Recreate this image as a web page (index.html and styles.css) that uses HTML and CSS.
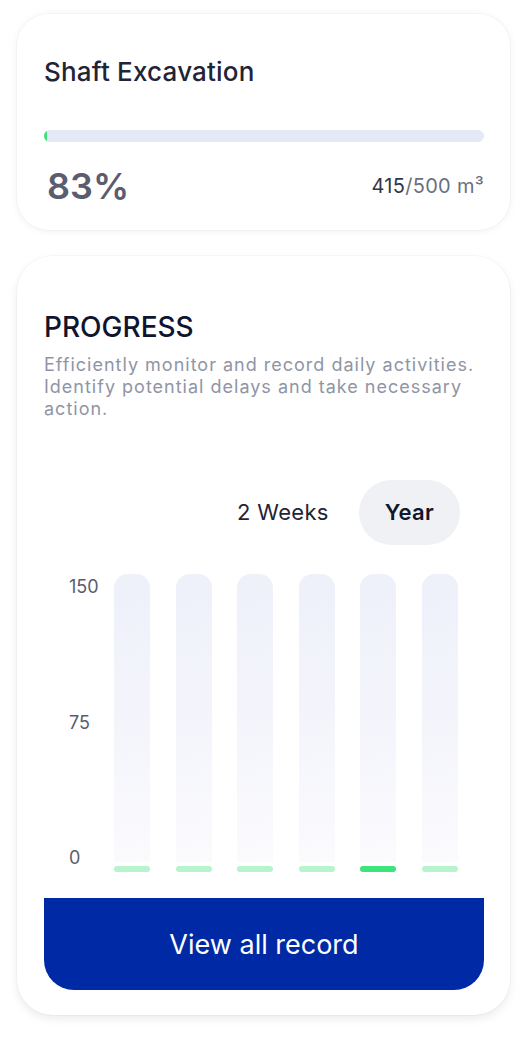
FILE: index.html
```html
<!DOCTYPE html>
<html lang="en">
<head>
<meta charset="utf-8">
<title>Progress</title>
<link rel="stylesheet" href="styles.css">
</head>
<body>
<div class="page">
  <section class="card card-summary">
    <h2 class="summary-title">Shaft Excavation</h2>
    <div class="track"><div class="track-fill" style="width:3px"></div></div>
    <div class="summary-row">
      <span class="percent">83%</span>
      <span class="amount"><span class="amount-done">415</span>/500 m³</span>
    </div>
  </section>

  <section class="card card-progress">
    <h1 class="progress-title">PROGRESS</h1>
    <p class="progress-desc">Efficiently monitor and record daily activities. Identify potential delays and take necessary action.</p>
    <div class="toggle">
      <span class="toggle-item">2 Weeks</span>
      <span class="toggle-item toggle-active">Year</span>
    </div>
    <div class="chart">
      <div class="axis">
        <span>150</span>
        <span>75</span>
        <span>0</span>
      </div>
      <div class="bars">
        <div class="bar"><div class="bar-track"></div><div class="bar-value"></div></div>
        <div class="bar"><div class="bar-track"></div><div class="bar-value"></div></div>
        <div class="bar"><div class="bar-track"></div><div class="bar-value"></div></div>
        <div class="bar"><div class="bar-track"></div><div class="bar-value"></div></div>
        <div class="bar"><div class="bar-track"></div><div class="bar-value bar-value-active"></div></div>
        <div class="bar"><div class="bar-track"></div><div class="bar-value"></div></div>
      </div>
    </div>
    <button class="cta">View all record</button>
  </section>
</div>
</body>
</html>
```

FILE: styles.css
```css
* { box-sizing: border-box; }
html, body { margin: 0; padding: 0; background: #ffffff; }
body {
  font-family: Inter, "Noto Sans", "Liberation Sans", sans-serif;
  color: #1e2235;
}
.page {
  display: flex;
  flex-direction: column;
  gap: 26px;
  padding: 14px 16px 24px 17px;
}
.card {
  background: #ffffff;
  border-radius: 32px;
  box-shadow: 0 0 0 1px rgba(0,0,0,0.025), 0 1px 8px rgba(0,0,0,0.06);
}
.card-summary {
  padding: 42px 26px 21px 27px;
  display: flex;
  flex-direction: column;
}
.summary-title {
  margin: 0;
  font-size: 26px;
  line-height: 32px;
  font-weight: 500;
  letter-spacing: 0.2px;
  color: #1f2437;
}
.track {
  margin-top: 42px;
  height: 12px;
  border-radius: 6px;
  background: #e5e9f5;
  overflow: hidden;
}
.track-fill {
  height: 100%;
  background: #3ee07a;
  border-radius: 6px 0 0 6px;
}
.summary-row {
  margin-top: 21px;
  display: flex;
  justify-content: space-between;
  align-items: center;
  padding-left: 3px;
}
.percent {
  font-size: 36px;
  line-height: 46px;
  font-weight: 600;
  color: #595d6e;
}
.amount {
  font-size: 20px;
  letter-spacing: 0.3px;
  color: #6b6f7f;
}
.amount-done { color: #30354a; }

.card-progress {
  border-radius: 36px;
  padding: 55px 26px 25px 27px;
  display: flex;
  flex-direction: column;
  box-shadow: 0 0 0 1px rgba(0,0,0,0.025), 0 4px 10px rgba(0,0,0,0.08);
}
.progress-title {
  margin: 0;
  font-size: 28px;
  line-height: 32px;
  font-weight: 500;
  color: #0f1430;
}
.progress-desc {
  margin: 11px 0 0;
  font-size: 18px;
  line-height: 22px;
  letter-spacing: 1px;
  color: #9095a5;
}
.toggle {
  margin-top: 60px;
  display: flex;
  justify-content: flex-end;
  align-items: center;
  gap: 4px;
  padding-right: 24px;
}
.toggle-item {
  font-size: 22px;
  line-height: 65px;
  padding: 0 26px;
  border-radius: 33px;
  letter-spacing: 0.3px;
  color: #1f2437;
}
.toggle-active {
  background: #f0f1f4;
  font-weight: 600;
  color: #121629;
}
.chart {
  margin-top: 29px;
  display: flex;
  height: 298px;
}
.axis {
  width: 70px;
  padding-left: 25px;
  display: flex;
  flex-direction: column;
  justify-content: space-between;
  font-size: 18px;
  line-height: 26px;
  color: #595d6e;
  padding-bottom: 1px;
}
.bars {
  width: 344px;
  display: flex;
  justify-content: space-between;
}
.bar {
  width: 36px;
  display: flex;
  flex-direction: column;
  gap: 4px;
}
.bar-track {
  flex: 1;
  border-radius: 14px 14px 0 0;
  background: linear-gradient(170deg, #eef0fa 0%, #f3f4fb 45%, #fbfbfe 100%);
}
.bar-value {
  height: 6px;
  border-radius: 3px;
  background: #b7f3cc;
}
.bar-value-active { background: #3de37b; }
.cta {
  margin-top: 26px;
  height: 92px;
  border: none;
  background: #0029a6;
  color: #ffffff;
  font-family: inherit;
  font-size: 27px;
  font-weight: 400;
  border-radius: 0 0 30px 30px;
  cursor: pointer;
}
```
